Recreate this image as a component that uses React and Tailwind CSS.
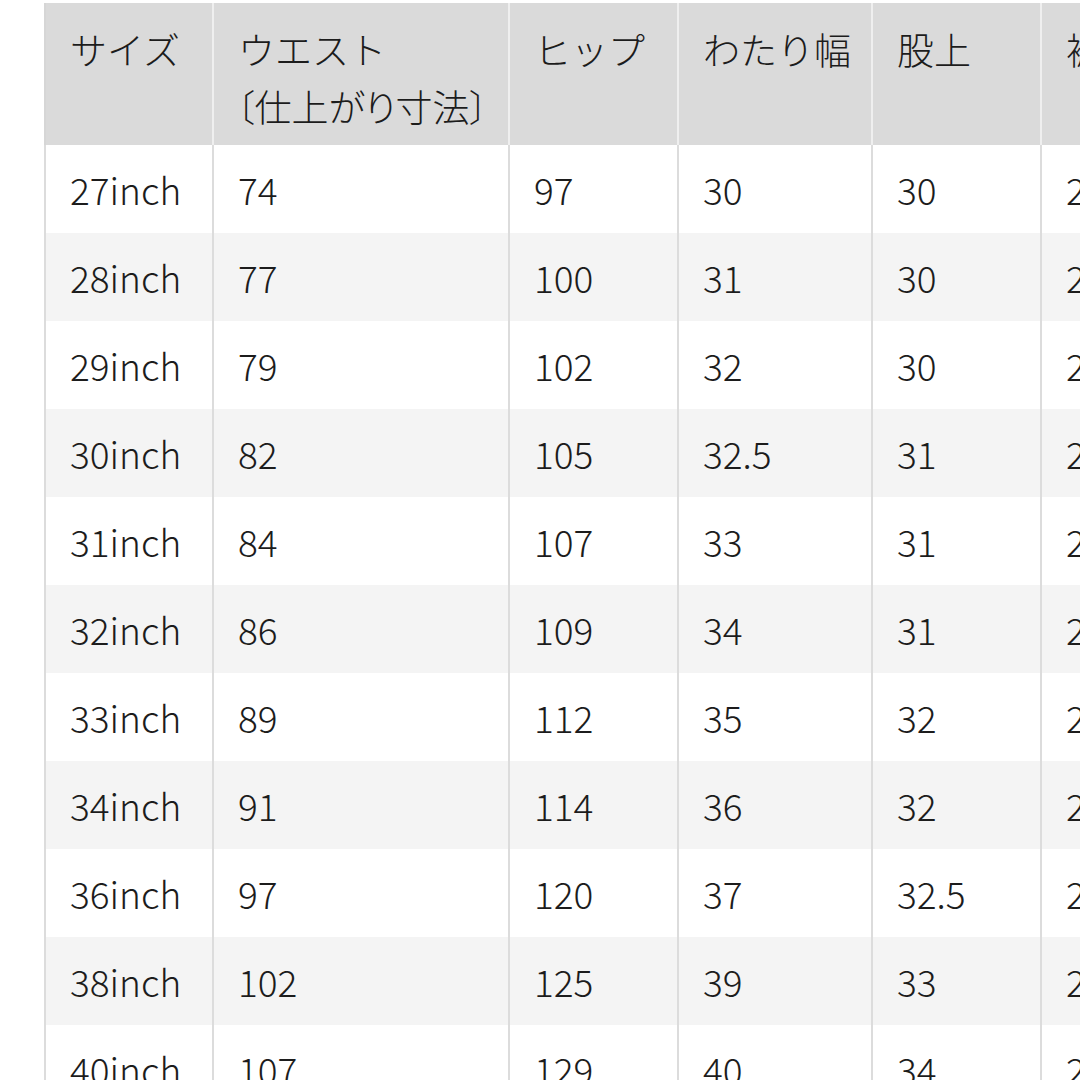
import React from "react";

const rows = [
  ["27inch", "74", "97", "30", "30", "20"],
  ["28inch", "77", "100", "31", "30", "20"],
  ["29inch", "79", "102", "32", "30", "21"],
  ["30inch", "82", "105", "32.5", "31", "21"],
  ["31inch", "84", "107", "33", "31", "22"],
  ["32inch", "86", "109", "34", "31", "22"],
  ["33inch", "89", "112", "35", "32", "23"],
  ["34inch", "91", "114", "36", "32", "23"],
  ["36inch", "97", "120", "37", "32.5", "24"],
  ["38inch", "102", "125", "39", "33", "25"],
  ["40inch", "107", "129", "40", "34", "26"],
];

const widths = ["w-[168px]", "w-[296px]", "w-[169px]", "w-[194px]", "w-[169px]", "w-[200px]"];

export default function App() {
  return (
    <div
      className="w-[1080px] h-[1080px] overflow-hidden bg-white text-[#1c1c1c] text-[37px] font-light leading-[57px] pt-[3px] pl-[44px]"
      style={{ fontFamily: '"Noto Sans CJK JP", "Noto Sans", sans-serif' }}
    >
      <div className="flex h-[142px] bg-[#dadada] w-[1196px]">
        {[
          <span>サイズ</span>,
          <>
            <span className="block">ウエスト</span>
            <span className="block [font-feature-settings:'palt'] -ml-[2px]">〔仕上がり寸法〕</span>
          </>,
          <span>ヒップ</span>,
          <span>わたり幅</span>,
          <span>股上</span>,
          <span>裾幅</span>,
        ].map((c, i) => (
          <div
            key={i}
            className={`${widths[i]} shrink-0 border-l-2 ${i === 0 ? "border-[#d6d6d6]" : "border-[#efefef]"} pl-[24px] pt-[18px] whitespace-nowrap`}
          >
            {c}
          </div>
        ))}
      </div>
      {rows.map((r, ri) => (
        <div
          key={ri}
          className={`flex h-[88px] w-[1196px] ${ri % 2 === 1 ? "bg-[#f4f4f4]" : "bg-white"}`}
        >
          {r.map((v, i) => (
            <div
              key={i}
              className={`${widths[i]} shrink-0 border-l-2 border-[#dcdcdc] pl-[24px] flex items-center whitespace-nowrap`}
            >
              {v}
            </div>
          ))}
        </div>
      ))}
    </div>
  );
}
